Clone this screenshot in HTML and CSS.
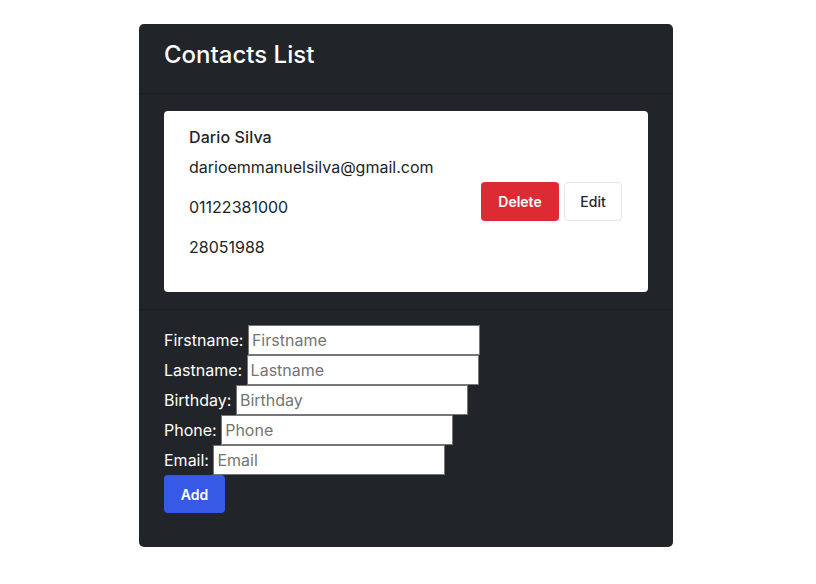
FILE: index.html
```html
<!DOCTYPE html>
<html>
<head>
<meta charset="utf-8">
<link rel="stylesheet" href="styles.css">
</head>
<body>
<div class="panel">
  <div class="panel-header"><h1>Contacts List</h1></div>
  <div class="panel-body">
    <div class="contact">
      <div class="info">
        <div class="name">Dario Silva</div>
        <div class="line">darioemmanuelsilva@gmail.com</div>
        <div class="line">01122381000</div>
        <div class="line">28051988</div>
      </div>
      <div class="actions">
        <button class="btn btn-danger">Delete</button>
        <button class="btn btn-light">Edit</button>
      </div>
    </div>
  </div>
  <form class="panel-footer">
    <div class="row"><label>Firstname:</label><input placeholder="Firstname"></div>
    <div class="row"><label>Lastname:</label><input placeholder="Lastname"></div>
    <div class="row"><label>Birthday:</label><input placeholder="Birthday"></div>
    <div class="row"><label>Phone:</label><input placeholder="Phone"></div>
    <div class="row"><label>Email:</label><input placeholder="Email"></div>
    <button type="button" class="btn btn-primary">Add</button>
  </form>
</div>
</body>
</html>
```
FILE: styles.css
```css
* { box-sizing: border-box; }
body {
  margin: 0;
  padding: 24px 0 0 139px;
  background: #fff;
  font-family: Inter, "Noto Sans", sans-serif;
  color: #212529;
}
.panel {
  width: 534px;
  background: #212529;
  border-radius: 5px;
  overflow: hidden;
}
.panel-header {
  height: 70px;
  padding: 16px 25px 0;
  border-bottom: 1px solid #1a1d21;
}
.panel-header h1 {
  margin: 0;
  font-size: 24px;
  font-weight: 500;
  color: #fff;
  line-height: 29px;
}
.panel-body {
  padding: 17px 25px 17px;
  border-bottom: 1px solid #1a1d21;
}
.contact {
  background: #fff;
  border-radius: 4px;
  height: 181px;
  padding: 14px 26px 0 25px;
  display: flex;
  align-items: center;
  justify-content: space-between;
}
.info { align-self: flex-start; font-size: 16px; }
.name { line-height: 24px; margin-bottom: 6px; font-weight: 500; letter-spacing: 0.1px; }
.line { line-height: 24px; margin-bottom: 16px; }
.actions { display: flex; gap: 5px; margin-top: -15px; }
.btn {
  font-family: Inter, "Noto Sans", sans-serif;
  font-size: 14px;
  font-weight: 600;
  height: 39px;
  border-radius: 4px;
  border: 1px solid transparent;
  cursor: pointer;
}
.btn-danger { background: #dc2b33; color: #fff; width: 78px; }
.btn-light { background: #fff; color: #212529; border-color: #e3e5e8; width: 58px; font-weight: 500; }
.panel-footer {
  padding: 15px 25px 34px;
  margin: 0;
}
.row {
  display: flex;
  align-items: center;
  height: 30px;
  color: #fff;
  font-size: 16px;
}
.row label { margin-right: 4.5px; }
.row input {
  width: 232px;
  height: 30px;
  border: 1px solid #767676;
  background: #fff;
  font-family: Inter, "Noto Sans", sans-serif;
  font-size: 16px;
  padding: 0 3px;
  color: #212529;
}
.row input::placeholder { color: #757575; }
.btn-primary {
  margin-top: 0;
  background: #3659e6;
  color: #fff;
  width: 61px;
  height: 38px;
}
```
